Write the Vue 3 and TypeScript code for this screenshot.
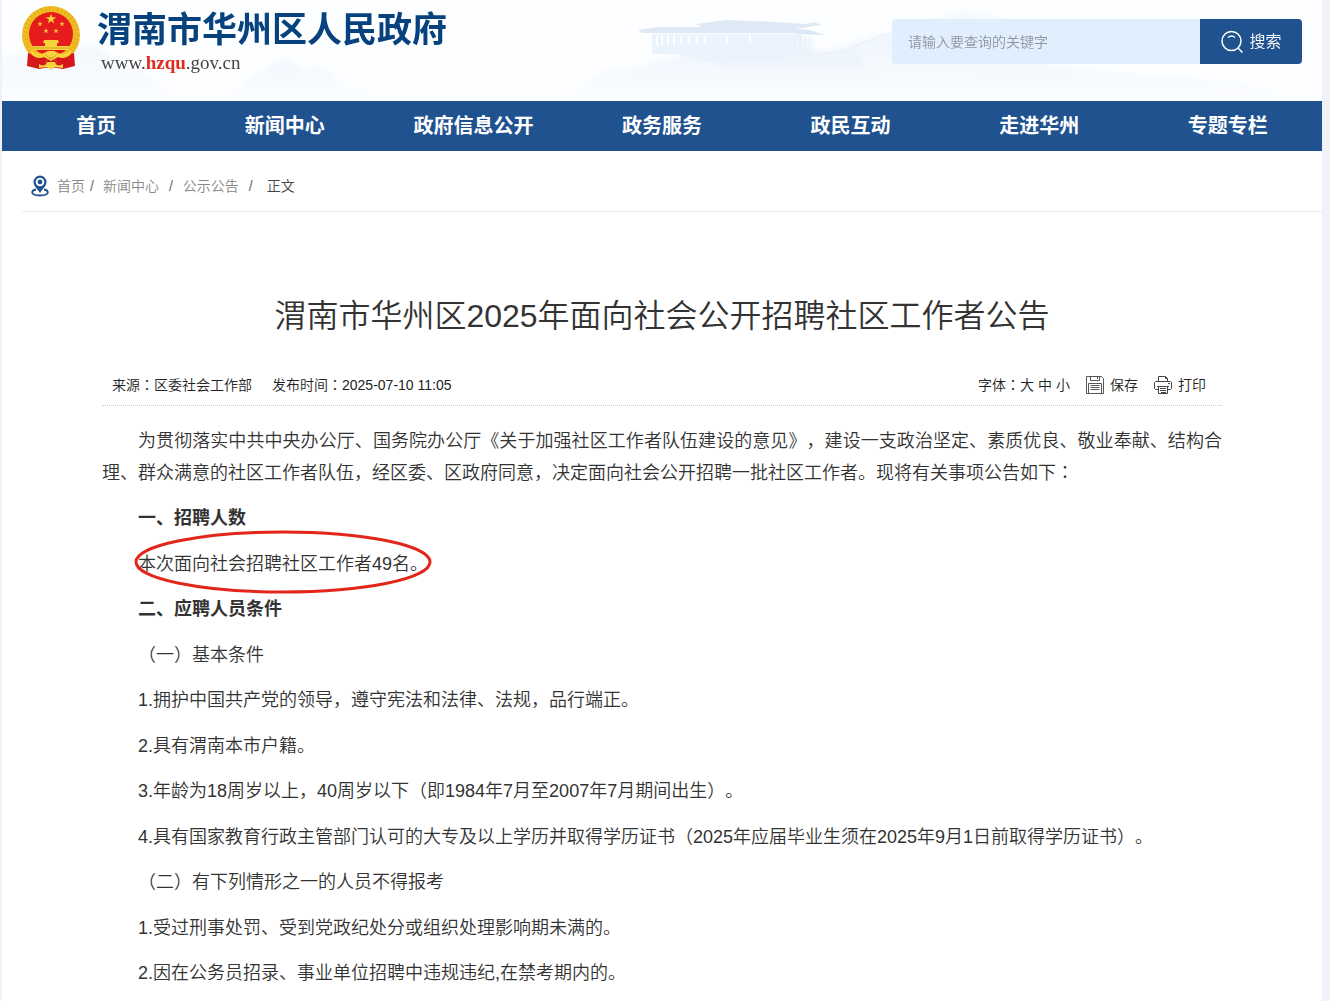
<script setup lang="ts">
import { ref } from 'vue'

interface Block {
  text: string
  kind?: 'heading' | 'marked'
}

const keyword = ref('')

const navItems: string[] = ['首页', '新闻中心', '政府信息公开', '政务服务', '政民互动', '走进华州', '专题专栏']

const sizes: string[] = ['大', '中', '小']

const blocks: Block[] = [
  { text: '一、招聘人数', kind: 'heading' },
  { text: '本次面向社会招聘社区工作者49名。', kind: 'marked' },
  { text: '二、应聘人员条件', kind: 'heading' },
  { text: '（一）基本条件' },
  { text: '1.拥护中国共产党的领导，遵守宪法和法律、法规，品行端正。' },
  { text: '2.具有渭南本市户籍。' },
  { text: '3.年龄为18周岁以上，40周岁以下（即1984年7月至2007年7月期间出生）。' },
  { text: '4.具有国家教育行政主管部门认可的大专及以上学历并取得学历证书（2025年应届毕业生须在2025年9月1日前取得学历证书）。' },
  { text: '（二）有下列情形之一的人员不得报考' },
  { text: '1.受过刑事处罚、受到党政纪处分或组织处理影响期未满的。' },
  { text: '2.因在公务员招录、事业单位招聘中违规违纪,在禁考期内的。' },
]

const star = 'M0-10 2.3-3.1 9.5-3.1 3.7 1.2 5.9 8.1 0 3.8-5.9 8.1-3.7 1.2-9.5-3.1-2.3-3.1Z'
</script>

<template>
  <div class="page">
    <header class="header">
      <svg class="scenery" viewBox="0 0 1320 101" preserveAspectRatio="xMidYMin slice" aria-hidden="true">
        <defs>
          <linearGradient id="mist" x1="0" y1="0" x2="0" y2="1">
            <stop offset="0" stop-color="#e9f2fc" />
            <stop offset="1" stop-color="#fafcff" />
          </linearGradient>
          <filter id="soft"><feGaussianBlur stdDeviation="3" /></filter>
          <filter id="slight"><feGaussianBlur stdDeviation="0.7" /></filter>
        </defs>
        <g filter="url(#soft)" fill="url(#mist)">
          <path opacity=".5" d="M-10 60 30 52 90 44 120 62 150 78 180 101H-10Z" />
          <path opacity=".6" d="M225 101 258 72 285 58 305 72 318 66 350 90 400 101Z" />
          <path opacity=".8" d="M560 101 600 72 640 66 680 54 780 54 830 50 880 34 930 36 990 58 1100 72 1230 82 1300 101Z" />
          <path opacity=".4" d="M830 50 885 36 960 10 1010 20 1060 60 900 80Z" />
        </g>
        <path filter="url(#soft)" fill="#edf4fc" d="M670 40H810V54L860 54V66H720Z" />
        <g filter="url(#slight)">
          <path fill="#ebf3fc" d="M650 34h150v18l-30 10h-70l-24-8h-26z" />
          <path fill="#dfe9f5" d="M636 30l20-3h130l25 4v2H640zM694 24l30-4 50 2 30 2 8-2 8 3-20 3H702zM792 34l16-4 16 5z" />
          <path stroke="#fdfeff" stroke-width="2" d="M655 36v10M660 36v9M666 36v8M672 36v8M679 36v8M687 36v8M695 36v8M703 36v8M725 36v8M748 36v6" />
          <path stroke="#e3ecf7" stroke-width="1" d="M793 36v9M798 36v9M803 36v9M808 36v9" />
          <path fill="none" stroke="#e6eef8" d="M652 35v19M790 54h30l20-2 26-11 22-8" />
        </g>
      </svg>

      <a class="brand" href="#" aria-label="渭南市华州区人民政府">
        <svg class="emblem" viewBox="0 0 60 66" aria-hidden="true">
          <circle cx="30" cy="30" r="29" fill="#efbc22" />
          <circle cx="30" cy="30" r="26" fill="none" stroke="#d8921b" stroke-width="5" stroke-dasharray="1 3" opacity=".4" />
          <circle cx="30" cy="29" r="22" fill="#e51b1c" />
          <path fill="#d6181b" d="M7 48 20 51 30 54 40 51 53 48 54 61 42 64 30 62 18 64 6 61Z" />
          <g fill="#f8d33c">
            <path :d="star" transform="translate(30 14) scale(.55)" />
            <path :d="star" transform="translate(19 19) scale(.28)" />
            <path :d="star" transform="translate(41 19) scale(.28)" />
            <path :d="star" transform="translate(25 26) scale(.28)" />
            <path :d="star" transform="translate(35 26) scale(.28)" />
            <path d="M23 35h14l1 3h-2v3h12v4H12v-4h12v-3h-2z" />
            <path d="M10 44q5 7 13 4l4-2h6l4 2q8 3 13-4v5q-6 6-13 3l-7 4-7-4q-7 3-13-3z" />
            <path d="M18 59q6 4 8-2h8q2 6 8 2v4l-9-1-3 3-3-3-9 1z" />
          </g>
          <path fill="none" stroke="#c98218" d="M24 49q6 8 12 0M24 57q6-7 12 0M12 43h36" opacity=".6" />
        </svg>
        <span class="brand-text">
          <span class="brand-name">渭南市华州区人民政府</span>
          <span class="brand-url">www.<b>hzqu</b>.gov.cn</span>
        </span>
      </a>

      <form class="search" role="search" @submit.prevent>
        <input v-model="keyword" type="text" placeholder="请输入要查询的关键字" aria-label="请输入要查询的关键字" />
        <button type="submit">
          <svg width="24" height="24" viewBox="0 0 24 24" fill="none" stroke="#fff" stroke-width="1.5" aria-hidden="true">
            <circle cx="11.5" cy="11" r="9.5" />
            <path d="M18 18l4.5 4.5M8 7.500q3.500-3 7 0" />
          </svg>
          <span>搜索</span>
        </button>
      </form>
    </header>

    <nav class="nav">
      <a v-for="item in navItems" :key="item" href="#">{{ item }}</a>
    </nav>

    <nav class="crumbs">
      <svg width="18" height="22" viewBox="0 0 18 22" aria-hidden="true">
        <path fill="none" stroke="#1f528f" stroke-width="1.800" d="M5 14.500C2.500 15 1.200 16 1.200 17.300 1.200 19.300 5 20.500 9 20.500s7.800-1.200 7.800-3.200c0-1.300-1.300-2.300-3.800-2.800" />
        <path fill="#1f528f" fill-rule="evenodd" d="M9 .5a6.500 6.500 0 0 0-6.500 6.500C2.500 11 6.500 14 9 18c2.500-4 6.500-7 6.500-11A6.500 6.500 0 0 0 9 .5Zm0 2.200a4.300 4.300 0 1 1 0 8.600 4.300 4.300 0 0 1 0-8.600Z" />
        <circle cx="9" cy="7" r="2.400" fill="#1f528f" />
      </svg>
      <a href="#">首页</a><i class="tight">/</i>
      <a href="#">新闻中心</a><i>/</i>
      <a href="#">公示公告</a><i>/</i>
      <span class="current">正文</span>
    </nav>

    <main class="article">
      <h1>渭南市华州区2025年面向社会公开招聘社区工作者公告</h1>

      <div class="meta">
        <span>来源<span class="colon">：</span>区委社会工作部</span>
        <span>发布时间<span class="colon">：</span>2025-07-10 11:05</span>
        <div class="tools">
          <span class="sizes">字体<span class="colon">：</span><button v-for="s in sizes" :key="s" type="button">{{ s }}</button></span>
          <button class="tool" type="button">
            <svg width="18" height="18" viewBox="0 0 18 18" fill="none" stroke="#555" aria-hidden="true">
              <path d="M.5.5h15l2 2v15H.5zM4.500.5v4h9v-4M11.500 1v2M2.500 17V7.500h13V17M4.500 9.500h9M4.500 11.500h9M4.500 13.500h9" />
            </svg>
            <span>保存</span>
          </button>
          <button class="tool" type="button">
            <svg width="18" height="18" viewBox="0 0 18 18" fill="none" stroke="#444" aria-hidden="true">
              <path d="M4.500 5.500v-5h7l2 2v3M11.500.5v2h2M4 13.500H1.500l-1-1v-6l1-1h15l1 1v6l-1 1H14M3 10.500h12M4.500 10.500v7h9v-7M6 12.500h6M6 14.500h6M7 16.500h5M14 7.500h2" />
            </svg>
            <span>打印</span>
          </button>
        </div>
      </div>

      <div class="body">
        <p>为贯彻落实中共中央办公厅、国务院办公厅《关于加强社区工作者队伍建设的意见》，建设一支政治坚定、素质优良、敬业奉献、结构合理、群众满意的社区工作者队伍，经区委、区政府同意，决定面向社会公开招聘一批社区工作者。现将有关事项公告如下<span class="colon">：</span></p>
        <template v-for="block in blocks" :key="block.text">
          <h2 v-if="block.kind === 'heading'">{{ block.text }}</h2>
          <p v-else-if="block.kind === 'marked'">
            <span class="marked">{{ block.text }}
              <svg class="ring" viewBox="0 0 298 64" aria-hidden="true">
                <ellipse cx="149" cy="32" rx="147" ry="30" fill="none" stroke="#e3261c" stroke-width="3" />
              </svg>
            </span>
          </p>
          <p v-else>{{ block.text }}</p>
        </template>
      </div>
    </main>
  </div>
</template>

<style>
body {
  margin: 0;
  background: #f0f2f7;
}
</style>

<style scoped>
.page {
  margin: 0 8px 0 2px;
  background: #fff;
  color: #333;
  font-family: "Liberation Sans", "Noto Sans CJK SC", sans-serif;
  font-size: 14px;
  font-weight: 350;
  line-height: 20px;
  text-spacing-trim: space-all;
}

a {
  color: inherit;
  text-decoration: none;
}

button,
input {
  margin: 0;
  padding: 0;
  border: 0;
  background: none;
  color: inherit;
  font: inherit;
}

.colon {
  font-family: "Noto Sans CJK TC", sans-serif;
  line-height: 1;
}

.header {
  position: relative;
  display: flex;
  justify-content: space-between;
  height: 101px;
  background: #fdfeff;
  overflow: hidden;
}

.scenery {
  position: absolute;
  inset: 0;
  width: 100%;
  height: 100%;
}

.brand {
  position: relative;
  display: flex;
  gap: 16px;
  padding: 5px 0 0 19px;
}

.emblem {
  width: 60px;
  height: 66px;
}

.brand-text {
  display: flex;
  flex-direction: column;
}

.brand-name {
  color: #07427f;
  font-size: 35px;
  font-weight: 700;
  line-height: 50px;
}

.brand-url {
  padding-left: 4px;
  color: #444;
  font-family: "Liberation Serif", serif;
  font-size: 19px;
  font-weight: 400;
  line-height: 16px;
}

.brand-url b {
  color: #df2a20;
}

.search {
  position: relative;
  display: flex;
  width: 410px;
  height: 45px;
  margin: 19px 20px 0 0;
  border-radius: 4px;
  overflow: hidden;
}

.search input {
  flex: 1;
  min-width: 0;
  padding: 0 16px;
  background: #e1eefe;
}

.search input::placeholder {
  color: #8f979e;
  opacity: 1;
}

.search button {
  display: flex;
  align-items: center;
  justify-content: center;
  gap: 5px;
  width: 102px;
  background: #1f528f;
  color: #fff;
  font-size: 16px;
}

.nav {
  display: flex;
  background: #1f528f;
}

.nav a {
  flex: 1;
  color: #fff;
  font-size: 20px;
  font-weight: 700;
  line-height: 50px;
  text-align: center;
}

.crumbs {
  display: flex;
  align-items: center;
  margin-left: 20px;
  padding: 24px 0 14px 9px;
  border-bottom: 1px solid #e8eaec;
  color: #888;
}

.crumbs svg {
  margin-right: 8px;
}

.crumbs i {
  margin: 0 10px;
  color: #666;
  font-style: normal;
}

.crumbs i.tight {
  margin: 0 9px 0 5px;
}

.crumbs .current {
  margin-left: 4px;
  color: #444;
}

.article {
  padding: 80px 100px 12px;
}

h1 {
  margin: 0;
  font-size: 32px;
  font-weight: 350;
  line-height: 48px;
  text-align: center;
}

.meta {
  display: flex;
  align-items: center;
  gap: 20px;
  height: 40px;
  margin-top: 25px;
  padding: 0 16px 0 10px;
  border-bottom: 1px dotted #ccc;
  color: #222;
}

.tools {
  display: flex;
  align-items: center;
  gap: 16px;
  margin-left: auto;
}

.sizes button + button {
  margin-left: 4px;
}

.tool {
  display: flex;
  align-items: center;
  gap: 6px;
}

.body {
  padding-top: 19px;
  font-size: 18px;
  line-height: 32px;
}

.body p,
.body h2 {
  margin: 0 0 13px;
  font-size: 18px;
  text-align: justify;
  text-indent: 36px;
}

.body > :nth-child(even) {
  margin-bottom: 14px;
}

.body h2 {
  font-weight: 700;
}

.marked {
  position: relative;
}

.ring {
  position: absolute;
  top: -24px;
  left: -4px;
  width: 298px;
  height: 64px;
}
</style>
